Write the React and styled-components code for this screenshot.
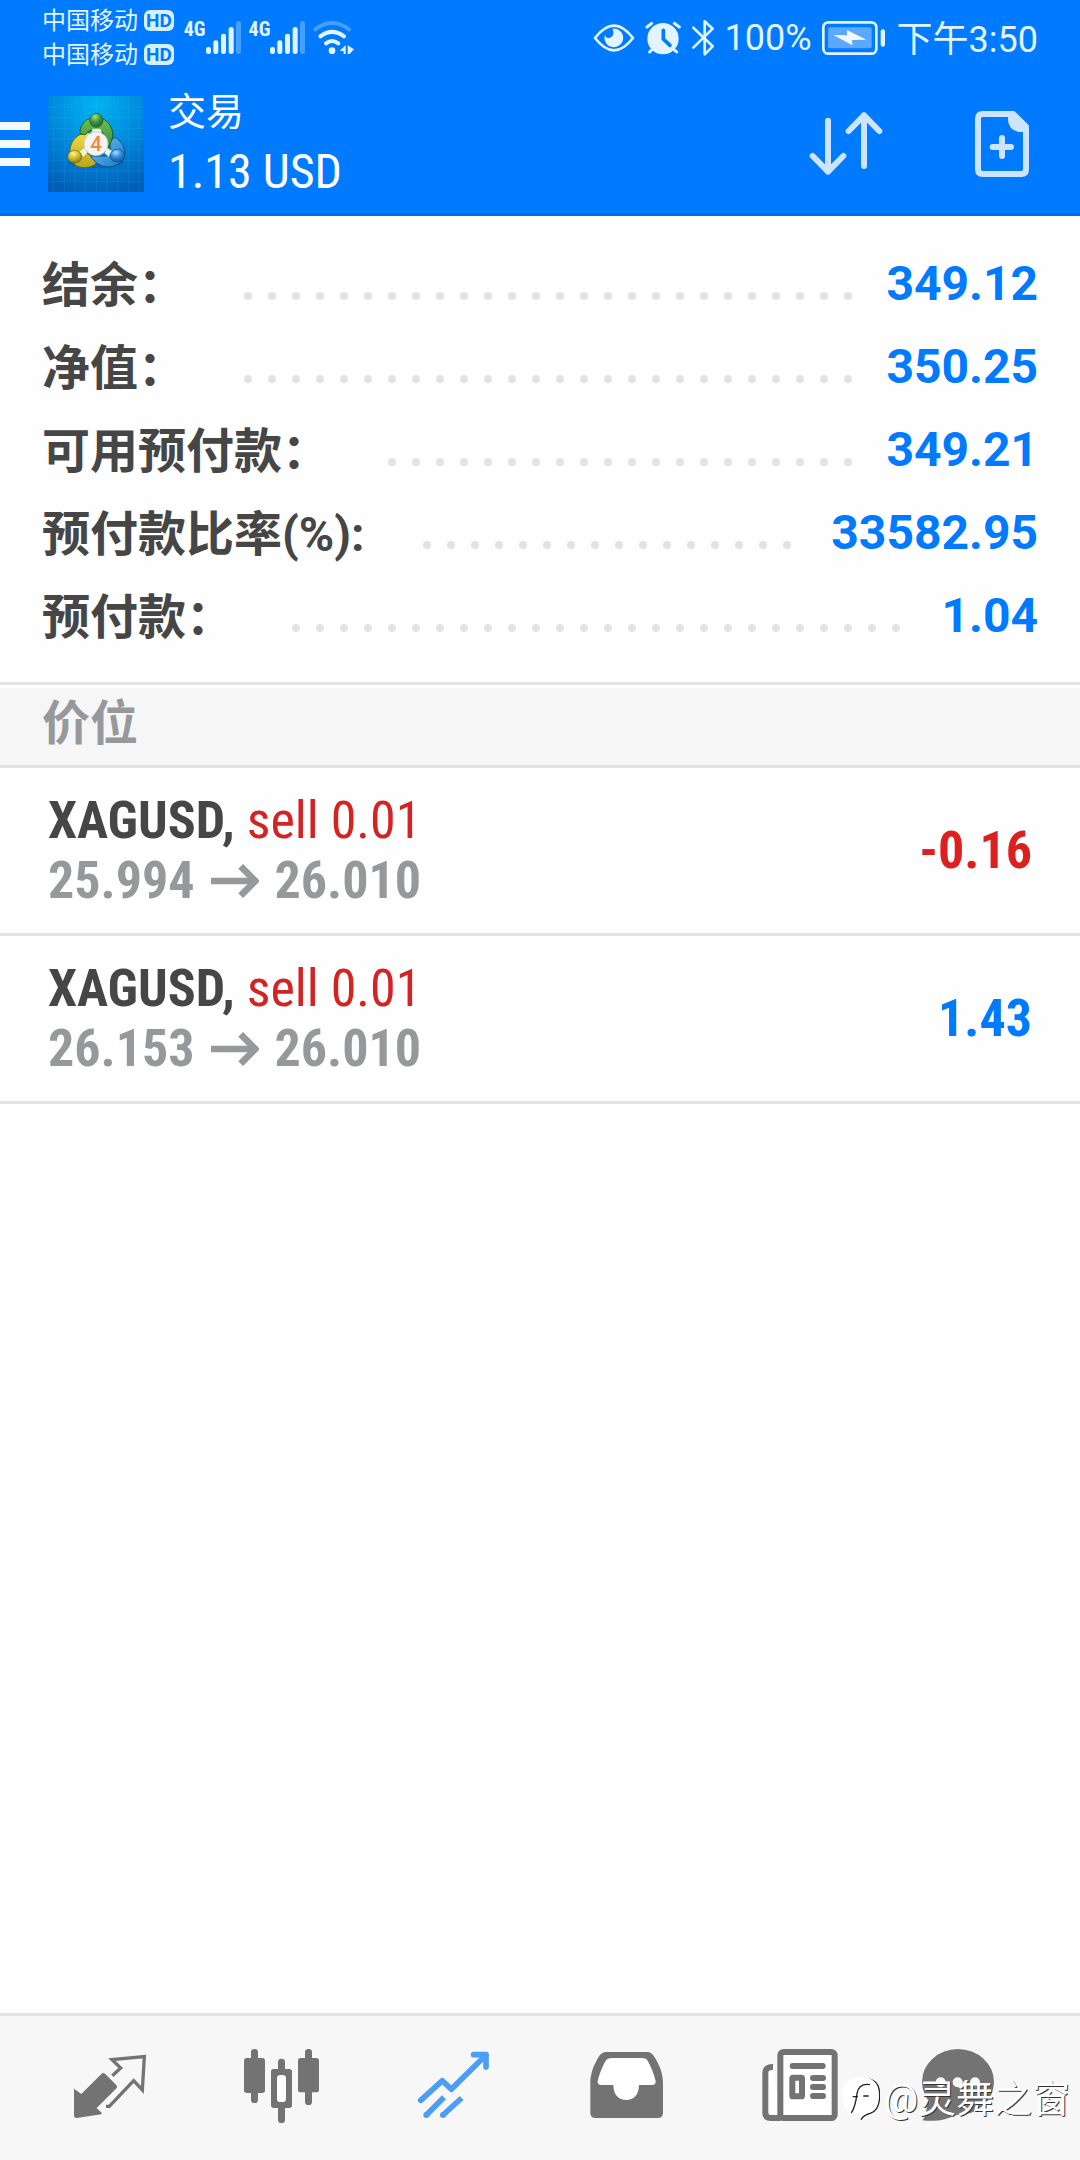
import React from 'react'
import styled, { createGlobalStyle } from 'styled-components'

const summary = [
  { label: '结余：', value: '349.12' },
  { label: '净值：', value: '350.25' },
  { label: '可用预付款：', value: '349.21' },
  { label: '预付款比率(%):', value: '33582.95' },
  { label: '预付款：', value: '1.04' },
]

const positions = [
  { id: 1, symbol: 'XAGUSD', side: 'sell 0.01', open: '25.994', current: '26.010', profit: '-0.16' },
  { id: 2, symbol: 'XAGUSD', side: 'sell 0.01', open: '26.153', current: '26.010', profit: '1.43' },
]

const SignalIcon = () => (
  <svg width='35' height='33' viewBox='612 57 105 99' fill='currentColor'>
    <rect x='612' y='135' width='15' height='21' rx='7' />
    <rect x='634' y='115' width='15' height='41' rx='7' />
    <rect x='657' y='95' width='15' height='61' rx='7' />
    <rect x='680' y='75' width='15' height='81' rx='7' />
    <rect x='702' y='57' width='15' height='99' rx='7' opacity='0.3' />
  </svg>
)

const WifiIcon = () => (
  <svg width='41' height='33' viewBox='943 57 123 99' fill='none' stroke='currentColor' strokeWidth='12' strokeLinecap='round'>
    <path d='M950 82 Q1000 44 1051 82' opacity='0.3' />
    <path d='M965 103 Q1000 76 1036 103' />
    <path d='M982 124 Q1000 110 1019 124' />
    <circle cx='1000' cy='146' r='10' fill='currentColor' stroke='none' />
    <path d='M1023 146 L1041 130 V156 H1035 V148Z M1047 130 L1066 142 L1053 156 H1047Z' fill='currentColor' stroke='none' />
  </svg>
)

const EyeIcon = () => (
  <svg width='42' height='36' viewBox='67 56 126 108' fill='none' stroke='currentColor' strokeWidth='8'>
    <path d='M73 110 Q130 36 187 110 Q130 184 73 110Z' strokeLinejoin='round' />
    <path d='M126 82 A28 28 0 1 1 103 101 Q106 112 118 109 Q133 104 126 82Z' fill='currentColor' stroke='none' />
  </svg>
)

const AlarmIcon = () => (
  <svg width='36' height='36' viewBox='226 56 108 108' fill='none' stroke='currentColor' strokeWidth='9' strokeLinecap='round'>
    <circle cx='280' cy='112' r='47' fill='currentColor' stroke='none' />
    <path d='M232 77 L246 66 M329 77 L314 66 M240 152 L250 142 M321 152 L310 142' />
    <path d='M281 87 V113 L301 132' stroke='#007aff' strokeWidth='11' />
  </svg>
)

const BluetoothIcon = () => (
  <svg width='24' height='38' viewBox='366 53 72 114' fill='none' stroke='currentColor' strokeWidth='8' strokeLinecap='round' strokeLinejoin='round'>
    <path d='M373 79 L431 135 L407 159 V60 L431 82 L373 139' />
  </svg>
)

const BatteryIcon = () => (
  <svg width='63' height='34' viewBox='750 59 189 102'>
    <rect x='754' y='63' width='159' height='94' rx='15' fill='none' stroke='currentColor' strokeWidth='8' />
    <rect x='768' y='78' width='131' height='63' rx='6' fill='#5ba9ff' />
    <rect x='926' y='84' width='13' height='52' rx='6' fill='currentColor' />
    <path d='M784 101 L825 102 L825 86 L883 115 L840 116 L841 132Z' fill='#f2faff' />
  </svg>
)

const AppLogo = () => (
  <svg width='96' height='96' viewBox='24 24 288 288'>
    <defs>
      <radialGradient id='logoBg' cx='0.5' cy='0.1' r='0.95'>
        <stop offset='0' stopColor='#00b4f0' />
        <stop offset='0.5' stopColor='#0089dc' />
        <stop offset='1' stopColor='#005cb4' />
      </radialGradient>
      <linearGradient id='green' x1='0' y1='0' x2='0' y2='1'>
        <stop offset='0' stopColor='#6fc04f' />
        <stop offset='1' stopColor='#2c8435' />
      </linearGradient>
      <linearGradient id='yellow' x1='0' y1='0' x2='0' y2='1'>
        <stop offset='0' stopColor='#f0dc48' />
        <stop offset='1' stopColor='#bba51c' />
      </linearGradient>
      <linearGradient id='blue' x1='0' y1='0' x2='1' y2='1'>
        <stop offset='0' stopColor='#6cc4f6' />
        <stop offset='1' stopColor='#1577c8' />
      </linearGradient>
      <radialGradient id='greenBall' cx='0.4' cy='0.25' r='0.8'>
        <stop offset='0' stopColor='#a9dc8c' />
        <stop offset='0.5' stopColor='#3b933e' />
        <stop offset='1' stopColor='#1d632b' />
      </radialGradient>
      <radialGradient id='yellowBall' cx='0.4' cy='0.25' r='0.8'>
        <stop offset='0' stopColor='#fbf39a' />
        <stop offset='0.5' stopColor='#d0ba28' />
        <stop offset='1' stopColor='#85780d' />
      </radialGradient>
      <radialGradient id='blueBall' cx='0.4' cy='0.25' r='0.8'>
        <stop offset='0' stopColor='#a7dcfa' />
        <stop offset='0.5' stopColor='#2c8bd6' />
        <stop offset='1' stopColor='#10549c' />
      </radialGradient>
    </defs>
    <rect x='24' y='24' width='288' height='288' fill='url(#logoBg)' />
    <path
      d='M40 24V312M73 24V312M105 24V312M137 24V312M169 24V312M201 24V312M233 24V312M265 24V312M297 24V312M24 57H312M24 89H312M24 121H312M24 153H312M24 185H312M24 217H312M24 249H312M24 281H312'
      stroke='#4fc0f5'
      strokeOpacity='0.22'
      strokeWidth='2'
      fill='none'
    />
    <ellipse cx='168' cy='222' rx='84' ry='18' fill='#033f72' opacity='0.3' />
    <g strokeWidth='3'>
      <path d='M91 204 C84 162 112 132 150 134 L156 160 C138 168 134 184 142 196 L176 218 C162 240 126 246 104 230Z' fill='url(#yellow)' stroke='#6c6414' />
      <path d='M152 204 H200 Q216 192 208 160 L224 148 C248 158 262 190 250 214 C226 246 176 246 152 204Z' fill='url(#blue)' stroke='#0d4d88' />
      <path d='M120 138 C118 108 140 88 168 88 C204 88 228 126 214 160 C208 178 198 190 182 202 L194 150 Q190 124 168 126 Q146 124 136 140Z' fill='url(#green)' stroke='#1d5c2c' />
    </g>
    <path d='M158 122 H181 L186 134 H154Z M118 192 L136 178 L142 194 L130 206Z M216 190 L200 178 L194 196 L206 206Z' fill='#eef5e9' />
    <ellipse cx='169' cy='97' rx='20' ry='21' fill='url(#greenBall)' stroke='#1d5c2c' strokeWidth='2' />
    <ellipse cx='104' cy='206' rx='21' ry='19' fill='url(#yellowBall)' stroke='#6c6414' strokeWidth='2' />
    <ellipse cx='232' cy='203' rx='22' ry='19' fill='url(#blueBall)' stroke='#0d4d88' strokeWidth='2' />
    <circle cx='168' cy='167' r='36' fill='#f3f3f3' stroke='#b9c2bd' strokeWidth='2' />
    <text x='168' y='188' textAnchor='middle' fontFamily='Roboto, sans-serif' fontWeight='500' fontSize='62' fill='#f28a35'>4</text>
  </svg>
)

const SortIcon = () => (
  <svg width='96' height='96' viewBox='684 288 288 288' fill='none' stroke='currentColor' strokeWidth='18' strokeLinecap='round' strokeLinejoin='round'>
    <path d='M774 362 V515 M728 468 L774 515 L820 468' />
    <path d='M882 498 V346 M836 393 L882 346 L928 393' />
  </svg>
)

const NewOrderIcon = () => (
  <svg width='96' height='96' viewBox='1152 288 288 288' fill='none' stroke='currentColor' strokeWidth='18'>
    <path d='M1238 342 H1330 L1368 380 V508 Q1368 522 1354 522 H1238 Q1224 522 1224 508 V356 Q1224 342 1238 342Z' strokeLinejoin='round' />
    <path d='M1314 338 H1334 L1374 378 V396 H1350 Q1316 392 1314 360Z' fill='currentColor' stroke='none' />
    <path d='M1268 441 H1323 M1296 414 V468' strokeLinecap='round' />
  </svg>
)

const PriceArrow = () => (
  <svg width='48' height='34' viewBox='623 252 144 102' fill='none' stroke='currentColor'>
    <path d='M623 303 H755' strokeWidth='20' />
    <path d='M712 259 L756 303 L712 347' strokeWidth='20' />
  </svg>
)

const QuotesIcon = () => (
  <svg width='96' height='96' viewBox='66 120 288 288'>
    <path d='M102 266 L124 282 L184 222 Q190 216 196 222 L228 254 Q234 260 228 266 L170 324 L185 338 L184 343 L110 354 Q102 354 102 346Z' fill='currentColor' />
    <path d='M217 227 L242 204 L216 179 L313 170 L307 270 L281 242 L208 319 H198' fill='none' stroke='currentColor' strokeWidth='10' />
  </svg>
)

const ChartIcon = () => (
  <svg width='96' height='96' viewBox='582 120 288 288' fill='currentColor'>
    <rect x='633' y='147' width='21' height='162' rx='10' />
    <rect x='612' y='174' width='63' height='105' rx='8' />
    <rect x='714' y='176' width='21' height='193' rx='10' />
    <rect x='693' y='207' width='63' height='117' rx='8' />
    <rect x='711' y='225' width='27' height='81' rx='10' fill='#fff' />
    <rect x='795' y='147' width='21' height='168' rx='10' />
    <rect x='774' y='174' width='63' height='103' rx='8' />
  </svg>
)

const TradeIcon = () => (
  <svg width='96' height='96' viewBox='78 120 288 288' fill='none' stroke='currentColor' strokeWidth='17'>
    <path d='M122 301 L187 242 L214 268 L318 165' strokeLinecap='round' strokeLinejoin='round' />
    <path d='M281 164 H318 V201' strokeLinecap='round' strokeLinejoin='round' />
    <path d='M139 345 L192 292 M189 345 L245 294' />
    <circle cx='139' cy='345' r='9' fill='currentColor' stroke='none' />
    <circle cx='189' cy='345' r='9' fill='currentColor' stroke='none' />
  </svg>
)

const HistoryIcon = () => (
  <svg width='96' height='96' viewBox='594 120 288 288'>
    <path d='M682 156 H800 C812 156 818 162 824 172 C840 198 849 222 849 250 V338 Q849 354 833 354 H647 Q631 354 631 338 V250 C631 222 640 198 655 172 C661 162 668 156 682 156Z' fill='currentColor' />
    <path d='M696 174 H786 Q799 174 804 184 C814 203 822 222 827 243 Q828 255 816 255 H777 C777 285 760 300 739 300 C717 300 700 285 700 255 H664 Q652 255 653 243 C658 222 666 203 676 184 Q682 174 696 174Z' fill='#fff' />
  </svg>
)

const NewsIcon = () => (
  <svg width='96' height='96' viewBox='30 120 288 288' fill='none' stroke='currentColor' strokeWidth='18'>
    <path d='M99 201 Q76 200 76 220 V338 Q76 354 92 354 H122' fill='#fff' />
    <rect x='121' y='156' width='163' height='198' rx='10' fill='#fff' />
    <path d='M158 198 H248' strokeLinecap='round' />
    <rect x='157' y='233' width='29' height='56' rx='2' />
    <path d='M219 234 H249 M219 261 H249 M219 288 H249' strokeLinecap='round' />
  </svg>
)

const ChatIcon = () => (
  <svg width='96' height='96' viewBox='546 120 288 288' fill='currentColor'>
    <ellipse cx='654' cy='246' rx='108' ry='99' />
    <path d='M547 361 C562 344 556 326 566 306 L650 344 C622 358 590 366 547 361Z' />
    <g fill='#f7f7f7'>
      <circle cx='602' cy='247' r='15' />
      <circle cx='653' cy='247' r='15' />
      <circle cx='705' cy='247' r='15' />
    </g>
  </svg>
)

const WatermarkIcon = () => (
  <svg width='38' height='44' viewBox='298 240 114 132'>
    <path d='M355 368 C360 356 372 352 384 348 C402 342 411 322 411 294 C411 262 398 246 368 246' fill='none' stroke='#222' strokeWidth='4' />
    <path d='M355 241 C390 241 408 256 408 295 C408 332 394 346 374 349 Q360 354 355 364 Q350 352 336 350 C312 346 299 330 299 295 C299 256 318 241 355 241Z' fill='#fff' />
    <path d='M326 348 Q338 330 343 290 Q348 258 382 263 M330 299 H346 M362 297 H378' fill='none' stroke='#222' strokeWidth='4' />
  </svg>
)

const tabs = [
  { name: '行情', Icon: QuotesIcon },
  { name: '图表', Icon: ChartIcon },
  { name: '交易', Icon: TradeIcon, active: true },
  { name: '历史', Icon: HistoryIcon },
  { name: '新闻', Icon: NewsIcon },
  { name: '消息', Icon: ChatIcon },
]

const dots = Array.from({ length: 60 }, (_, i) => i)

const App = () => {
  return (
    <Page>
      <GlobalStyle />
      <StatusBar>
        <StatusGroup $gap={8}>
          <Carriers>
            <Carrier>中国移动<HdBadge>HD</HdBadge></Carrier>
            <Carrier>中国移动<HdBadge>HD</HdBadge></Carrier>
          </Carriers>
          <Signal><span>4G</span><SignalIcon /></Signal>
          <Signal><span>4G</span><SignalIcon /></Signal>
          <WifiIcon />
        </StatusGroup>
        <StatusGroup $gap={10}>
          <EyeIcon />
          <AlarmIcon />
          <BluetoothIcon />
          <StatusText>100%</StatusText>
          <BatteryIcon />
          <Clock>下午3:50</Clock>
        </StatusGroup>
      </StatusBar>
      <Toolbar>
        <MenuButton aria-label='菜单'><i /><i /><i /></MenuButton>
        <AppLogo />
        <Titles>
          <h1>交易</h1>
          <p>1.13 USD</p>
        </Titles>
        <Actions>
          <IconButton aria-label='排序'><SortIcon /></IconButton>
          <IconButton aria-label='新订单'><NewOrderIcon /></IconButton>
        </Actions>
      </Toolbar>
      <Summary>
        {summary.map(({ label, value }) => (
          <SummaryRow key={label}>
            <dt>{label}</dt>
            <Leader aria-hidden='true'>{dots.map((i) => <i key={i} />)}</Leader>
            <dd>{value}</dd>
          </SummaryRow>
        ))}
      </Summary>
      <SectionTitle>价位</SectionTitle>
      <Positions>
        {positions.map((p) => (
          <Position key={p.id}>
            <div>
              <Deal><b>{p.symbol},</b> <span>{p.side}</span></Deal>
              <Prices>{p.open}<PriceArrow />{p.current}</Prices>
            </div>
            <Profit $loss={p.profit.startsWith('-')}>{p.profit}</Profit>
          </Position>
        ))}
      </Positions>
      <TabBar>
        {tabs.map(({ name, Icon, active }) => (
          <Tab key={name} href='#' aria-label={name} $active={active}><Icon /></Tab>
        ))}
        <Watermark><WatermarkIcon />@灵舞之窗</Watermark>
      </TabBar>
    </Page>
  )
}

const GlobalStyle = createGlobalStyle`
*{
  box-sizing: border-box;
}
body{
  margin: 0;
  background-color: #fefefe;
  font-family: Roboto, 'Noto Sans CJK SC', sans-serif;
}
h1, h2, p, dl, dd, ul{
  margin: 0;
  padding: 0;
}
svg{
  display: block;
  flex: none;
}
button{
  border: none;
  padding: 0;
  background: none;
  color: inherit;
}
`;

const Page = styled.div`
display: flex;
flex-direction: column;
min-height: 100vh;
`;

const StatusBar = styled.div`
display: flex;
justify-content: space-between;
height: 72px;
padding: 3px 42px 0;
background-color: #007aff;
color: #e2f4ff;
`;

const StatusGroup = styled.div`
display: flex;
align-items: center;
gap: ${({ $gap }) => $gap}px;
`;

const Carriers = styled.div`
margin-right: 2px;
font-size: 24px;
line-height: 34px;
`;

const Carrier = styled.div`
display: flex;
align-items: center;
gap: 6px;
`;

const HdBadge = styled.span`
padding: 0 2px;
border-radius: 6px;
background-color: #d6efff;
color: #007aff;
font-size: 19px;
font-weight: 700;
line-height: 21px;
`;

const Signal = styled.div`
display: flex;
span{
  font-family: 'Roboto Condensed', Roboto, sans-serif;
  font-size: 20px;
  font-weight: 700;
  line-height: 16px;
}
`;

const StatusText = styled.span`
font-size: 36px;
`;

const Clock = styled(StatusText)`
margin-left: 2px;
padding-bottom: 4px;
`;

const Toolbar = styled.header`
display: flex;
align-items: center;
height: 144px;
padding-right: 30px;
background-color: #007aff;
box-shadow: inset 0 -3px #006ee0;
color: white;
`;

const MenuButton = styled.button`
display: flex;
flex-direction: column;
gap: 10px;
width: 30px;
margin-right: 18px;
i{
  height: 8px;
  background-color: #f2faff;
}
`;

const Titles = styled.div`
margin-left: 24px;
padding-bottom: 4px;
h1{
  font-size: 38px;
  font-weight: 400;
  line-height: 60px;
}
p{
  font-family: 'Roboto Condensed', Roboto, sans-serif;
  font-size: 48px;
  line-height: 60px;
}
`;

const Actions = styled.div`
display: flex;
gap: 60px;
margin-left: auto;
color: #cce4ff;
`;

const IconButton = styled.button`
width: 96px;
height: 96px;
`;

const Summary = styled.dl`
padding: 26px 42px 25px;
border-bottom: 3px solid #e3e3e3;
`;

const SummaryRow = styled.div`
display: flex;
align-items: center;
height: 83px;
font-size: 48px;
font-weight: 700;
dt{
  padding-bottom: 6px;
  color: #464646;
}
dd{
  color: #007aff;
}
`;

const Leader = styled.span`
display: flex;
flex: 1;
flex-wrap: wrap;
height: 8px;
margin: 24px 24px 0 50px;
overflow: hidden;
i{
  width: 8px;
  height: 8px;
  margin: 0 8px;
  border-radius: 50%;
  background-color: #e3e3e3;
}
`;

const SectionTitle = styled.h2`
height: 80px;
margin-top: 3px;
padding: 0 42px;
border-bottom: 3px solid #e3e3e3;
background-color: #f6f6f6;
color: #97989c;
font-size: 48px;
line-height: 72px;
`;

const Positions = styled.ul`
flex: 1;
list-style: none;
`;

const Position = styled.li`
display: flex;
align-items: center;
justify-content: space-between;
height: 168px;
padding: 0 48px;
border-bottom: 3px solid #e3e3e3;
font-family: 'Roboto Condensed', Roboto, sans-serif;
font-size: 52px;
line-height: 60px;
`;

const Deal = styled.p`
color: #464646;
span{
  color: #d32323;
}
`;

const Prices = styled.p`
display: flex;
align-items: center;
color: #97989c;
font-weight: 700;
svg{
  margin: 0 16px;
}
`;

const Profit = styled.strong`
color: ${({ $loss }) => $loss ? '#dc2020' : '#007aff'};
`;

const TabBar = styled.nav`
position: relative;
display: grid;
grid-template-columns: repeat(6, 1fr);
height: 147px;
padding: 0 24px;
border-top: 3px solid #e3e3e3;
background-color: #f7f7f7;
`;

const Tab = styled.a`
display: flex;
align-items: center;
justify-content: center;
color: ${({ $active }) => $active ? '#4a9ef8' : '#737373'};
`;

const Watermark = styled.div`
position: absolute;
right: 10px;
bottom: 37px;
display: flex;
align-items: center;
gap: 4px;
color: white;
font-size: 38px;
line-height: 48px;
text-shadow: 1px 1px 0 #333;
`;

export default App
